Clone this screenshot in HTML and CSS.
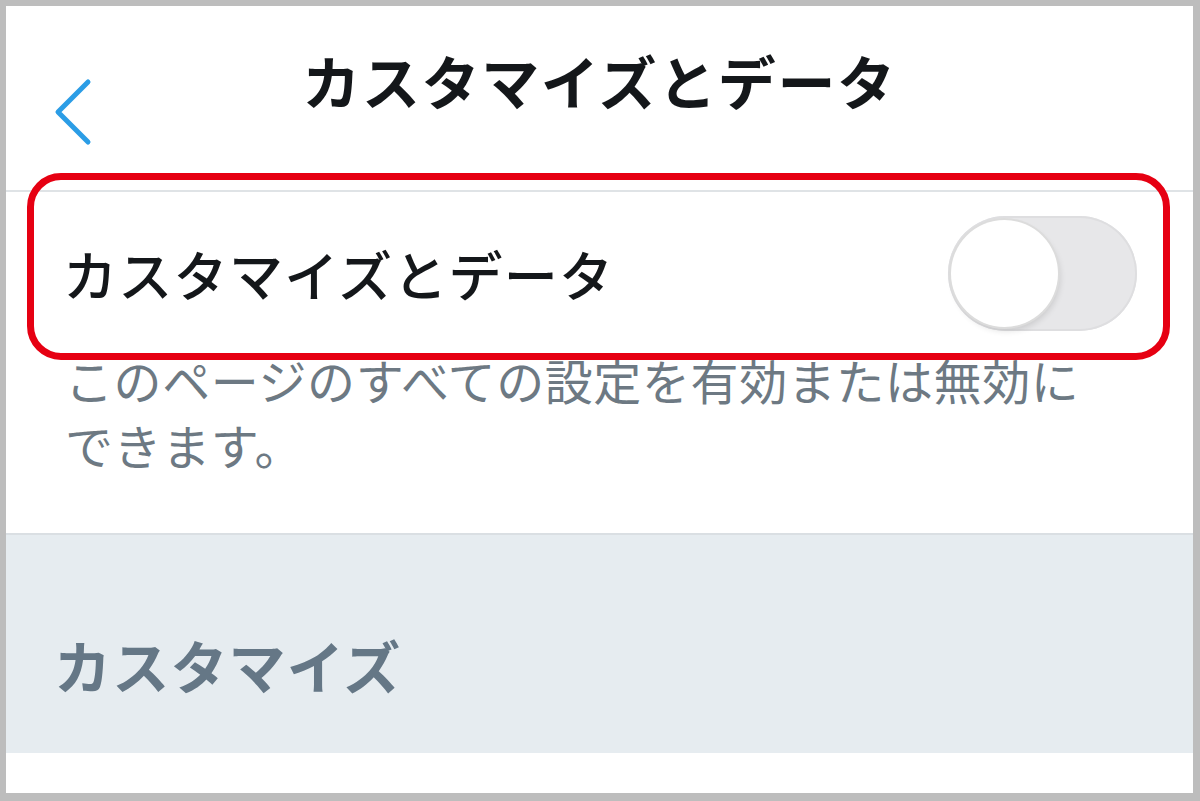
FILE: index.html
```html
<!DOCTYPE html>
<html lang="ja">
<head>
    <meta charset="UTF-8">
    <meta name="viewport" content="width=device-width, initial-scale=1.0">
    <title>カスタマイズとデータ</title>
    <link rel="stylesheet" href="styles.css">
</head>
<body>
    <div class="frame">
        <div class="screen">
            <header class="nav-bar">
                <button class="back-btn" aria-label="戻る">
                    <svg width="44" height="70" viewBox="0 0 44 70">
                        <polyline points="36,4 6,34 36,64" fill="none" stroke="#2b9de6" stroke-width="5" stroke-linecap="round" stroke-linejoin="round"/>
                    </svg>
                </button>
                <h1>カスタマイズとデータ</h1>
                <div class="nav-spacer"></div>
            </header>

            <div class="setting-row">
                <span class="setting-label">カスタマイズとデータ</span>
                <label class="toggle">
                    <input type="checkbox">
                    <span class="toggle-knob"></span>
                </label>
                <div class="highlight"></div>
            </div>

            <p class="setting-note">このページのすべての設定を有効または無効にできます。</p>

            <div class="section-header">
                <h2>カスタマイズ</h2>
            </div>

            <div class="section-body"></div>
        </div>
    </div>
</body>
</html>
```

FILE: styles.css
```css
:root {
    --frame-color: #bdbdbd;
    --text-color: #14171a;
    --muted-color: #6d7983;
    --section-color: #657786;
    --section-bg: #e6ecf0;
    --divider: #dfe3e6;
    --mark-red: #e60012;
    --track-color: #e7e7e9;
}

body {
    margin: 0;
    padding: 0;
    background-color: var(--frame-color);
    font-family: 'Noto Sans CJK JP', 'Noto Sans', sans-serif;
    color: var(--text-color);
}

.frame {
    width: 1200px;
    height: 801px;
    box-sizing: border-box;
    padding: 6px 7px 8px 6px;
}

.screen {
    height: 100%;
    background-color: #ffffff;
    display: flex;
    flex-direction: column;
    overflow: hidden;
}

.nav-bar {
    flex: 0 0 186px;
    display: grid;
    grid-template-columns: 1fr auto 1fr;
    border-bottom: 2px solid var(--divider);
    box-sizing: border-box;
}

.back-btn {
    align-self: start;
    justify-self: start;
    margin: 72px 0 0 46px;
    padding: 0;
    border: none;
    background: none;
    cursor: pointer;
}

.back-btn svg {
    display: block;
}

h1 {
    margin: 30px 0 0;
    font-size: 58px;
    font-weight: 700;
    line-height: 88px;
    letter-spacing: 1.6px;
    align-self: start;
}

.setting-row {
    position: relative;
    flex: 0 0 162px;
    display: flex;
    align-items: center;
    justify-content: space-between;
    padding: 0 56px 0 57px;
}

.setting-label {
    font-size: 54px;
    font-weight: 500;
    letter-spacing: 1.3px;
}

.toggle {
    position: relative;
    width: 189px;
    height: 115px;
    border-radius: 58px;
    background-color: var(--track-color);
    box-shadow: inset 0 0 0 2px #dedee0;
    cursor: pointer;
}

.toggle input {
    display: none;
}

.toggle-knob {
    position: absolute;
    top: 4px;
    left: 3px;
    width: 107px;
    height: 107px;
    border-radius: 50%;
    background-color: #ffffff;
    box-shadow: 0 0 0 2px #dcdcdc, 2px 4px 6px rgba(0, 0, 0, 0.12);
}

/* red annotation box drawn over the row */
.highlight {
    position: absolute;
    top: -19px;
    left: 21px;
    right: 23px;
    bottom: -6px;
    border: 7px solid var(--mark-red);
    border-radius: 34px;
    pointer-events: none;
}

.setting-note {
    margin: -7px 0 0;
    padding: 0 88px 56px 59px;
    font-size: 48px;
    line-height: 65px;
    letter-spacing: 0.6px;
    color: var(--muted-color);
}

.section-header {
    flex: 0 0 220px;
    box-sizing: border-box;
    background-color: var(--section-bg);
    border-top: 2px solid #dadfe3;
    padding: 91px 0 0 48px;
}

h2 {
    margin: 0;
    font-size: 57px;
    font-weight: 700;
    line-height: 76px;
    letter-spacing: 1.2px;
    color: var(--section-color);
}

.section-body {
    flex: 1;
}
```
